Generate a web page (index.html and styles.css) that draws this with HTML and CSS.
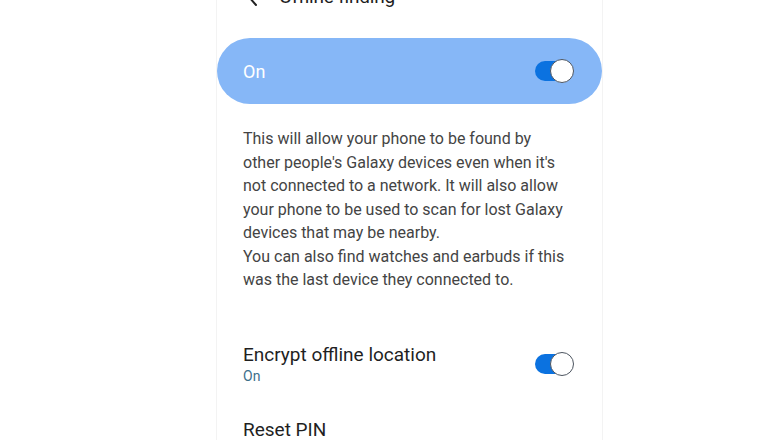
FILE: index.html
```html
<!DOCTYPE html>
<html lang="en">
<head>
<meta charset="utf-8">
<title>Offline finding</title>
<link rel="stylesheet" href="styles.css">
</head>
<body>
<div class="stage">
  <div class="phone">
    <header class="appbar">
      <span class="back" aria-hidden="true">
        <svg width="12" height="20" viewBox="0 0 12 20"><path d="M9 2 L2 10 L9 18" fill="none" stroke="#222" stroke-width="2" stroke-linecap="round" stroke-linejoin="round"/></svg>
      </span>
      <h1 class="title">Offline finding</h1>
    </header>

    <div class="master">
      <span class="master-label">On</span>
      <span class="switch on"><span class="knob"></span></span>
    </div>

    <p class="desc">This will allow your phone to be found by<br>other people's Galaxy devices even when it's<br>not connected to a network. It will also allow<br>your phone to be used to scan for lost Galaxy<br>devices that may be nearby.<br>You can also find watches and earbuds if this<br>was the last device they connected to.</p>

    <div class="row">
      <div class="row-text">
        <div class="row-title">Encrypt offline location</div>
        <div class="row-sub">On</div>
      </div>
      <span class="switch on small"><span class="knob"></span></span>
    </div>

    <div class="row plain">
      <div class="row-text">
        <div class="row-title">Reset PIN</div>
      </div>
    </div>
  </div>
</div>
</body>
</html>
```

FILE: styles.css
```css
* { box-sizing: border-box; }
html, body {
  margin: 0;
  padding: 0;
  background: #ffffff;
  overflow: hidden;
}
body {
  font-family: Roboto, "Noto Sans", "Liberation Sans", sans-serif;
  width: 780px;
  height: 440px;
}
.stage {
  display: flex;
  padding-left: 216px;
  height: 440px;
}
.phone {
  width: 387px;
  height: 440px;
  background: #ffffff;
  border-left: 1px solid #f3f3f3;
  border-right: 1px solid #f3f3f3;
  overflow: hidden;
}
.appbar {
  display: flex;
  align-items: center;
  height: 20px;
  margin-top: -13px;
  padding-left: 30px;
}
.back {
  display: flex;
  width: 32px;
}
.title {
  margin: 0;
  font-size: 19px;
  line-height: 20px;
  font-weight: 400;
  color: #1e1e1e;
  letter-spacing: -0.2px;
}
.master {
  margin-top: 31px;
  height: 66px;
  border-radius: 33px;
  background: #86b7f7;
  display: flex;
  align-items: center;
  justify-content: space-between;
  padding: 0 29px 0 26px;
}
.master-label {
  color: #ffffff;
  font-size: 18px;
}
.switch {
  position: relative;
  display: inline-block;
  width: 38px;
  height: 20px;
  border-radius: 10px;
  background: #0b72e0;
}
.switch .knob {
  position: absolute;
  right: -1px;
  top: -2px;
  width: 24px;
  height: 24px;
  border-radius: 50%;
  background: #ffffff;
  border: 1.3px solid #4d5560;
}
.desc {
  margin: 23px 0 0;
  padding-left: 26px;
  font-size: 16px;
  line-height: 23.5px;
  color: #444444;
  white-space: nowrap;
}
.row {
  display: flex;
  align-items: center;
  justify-content: space-between;
  padding: 0 29px 0 26px;
  margin-top: 51px;
}
.row.plain {
  margin-top: 33px;
}
.row-title {
  font-size: 19px;
  line-height: 24px;
  color: #1f1f1f;
}
.row-sub {
  font-size: 14px;
  line-height: 18px;
  color: #3d6f8b;
}
```
